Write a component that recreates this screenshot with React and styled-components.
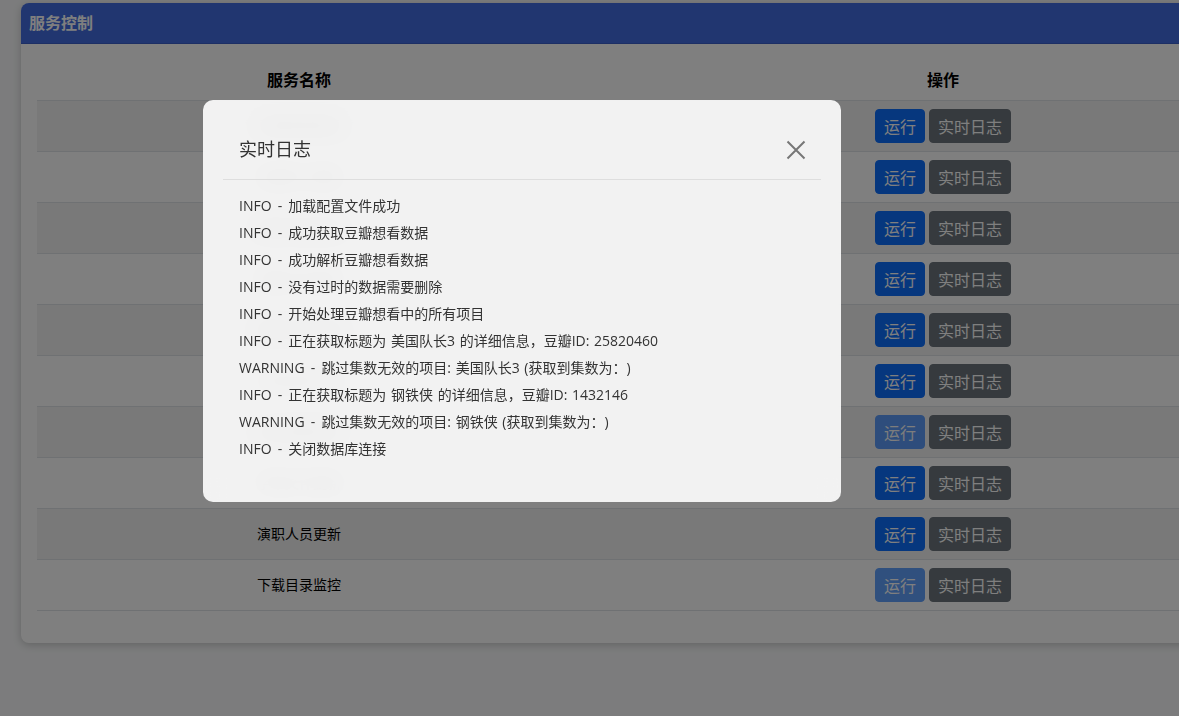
import React from "react";
import styled, { createGlobalStyle } from "styled-components";

const services = [
  { name: "豆瓣想看更新" },
  { name: "豆瓣热门更新" },
  { name: "电影信息更新" },
  { name: "剧集信息更新" },
  { name: "媒体文件扫描" },
  { name: "订阅内容下载" },
  { name: "站点数据同步", running: true },
  { name: "字幕文件更新" },
  { name: "演职人员更新" },
  { name: "下载目录监控", running: true },
];

const logs = [
  { level: "INFO", text: "加载配置文件成功" },
  { level: "INFO", text: "成功获取豆瓣想看数据" },
  { level: "INFO", text: "成功解析豆瓣想看数据" },
  { level: "INFO", text: "没有过时的数据需要删除" },
  { level: "INFO", text: "开始处理豆瓣想看中的所有项目" },
  { level: "INFO", text: "正在获取标题为 美国队长3 的详细信息，豆瓣ID: 25820460" },
  { level: "WARNING", text: "跳过集数无效的项目: 美国队长3 (获取到集数为：)" },
  { level: "INFO", text: "正在获取标题为 钢铁侠 的详细信息，豆瓣ID: 1432146" },
  { level: "WARNING", text: "跳过集数无效的项目: 钢铁侠 (获取到集数为：)" },
  { level: "INFO", text: "关闭数据库连接" },
];

const App = () => (
  <>
    <GlobalStyle />
    <Page>
      <Card>
        <CardHeader>服务控制</CardHeader>
        <CardBody>
          <Table>
            <colgroup>
              <col width="524" />
              <col />
            </colgroup>
            <thead>
              <tr>
                <HeadCell>服务名称</HeadCell>
                <HeadCell>操作</HeadCell>
              </tr>
            </thead>
            <tbody>
              {services.map((service) => (
                <Row key={service.name}>
                  <NameCell>{service.name}</NameCell>
                  <ActionCell>
                    <Button disabled={service.running}>运行</Button>
                    <Button $secondary>实时日志</Button>
                  </ActionCell>
                </Row>
              ))}
            </tbody>
          </Table>
        </CardBody>
      </Card>
    </Page>
    <Overlay>
      <Modal>
        <ModalHeader>
          <ModalTitle>实时日志</ModalTitle>
          <CloseButton aria-label="关闭">
            <svg width="20" height="20" viewBox="0 0 20 20" fill="none">
              <path d="M1.5 1.5L18.5 18.5M18.5 1.5L1.5 18.5" stroke="currentColor" strokeWidth="2" />
            </svg>
          </CloseButton>
        </ModalHeader>
        <ModalBody>
          {logs.map((line) => (
            <LogLine key={line.text}>
              <LogLevel>{line.level} - </LogLevel>
              {line.text}
            </LogLine>
          ))}
        </ModalBody>
      </Modal>
    </Overlay>
  </>
);

export default App;

const GlobalStyle = createGlobalStyle`
  html, body {
    margin: 0;
    height: 100%;
    overflow: hidden;
    background: #f8f9fa;
    font-family: "Open Sans", "Noto Sans CJK SC", sans-serif;
  }
`;

const Page = styled.div`
  padding: 3px 0 0 21px;
  width: 1320px;
`;

const Card = styled.div`
  width: 1320px;
  height: 640px;
  background: #fff;
  border-radius: 8px;
  box-shadow: 0 2px 8px rgba(0, 0, 0, 0.2);
  overflow: hidden;
`;

const CardHeader = styled.div`
  height: 41px;
  padding: 0 8px 2px;
  display: flex;
  align-items: center;
  background: #426ce0;
  border-bottom: 1px solid #3a5fc8;
  box-sizing: border-box;
  color: #fff;
  font-size: 16px;
  font-weight: 700;
`;

const CardBody = styled.div`
  padding: 16px;
`;

const Table = styled.table`
  width: 1288px;
  table-layout: fixed;
  border-collapse: collapse;
  color: #000;
`;

const HeadCell = styled.th`
  height: 40px;
  padding: 0 0 2px;
  font-size: 16px;
  font-weight: 700;
  text-align: center;
  border-bottom: 1px solid #dee2e6;
  box-sizing: border-box;
`;

const Row = styled.tr`
  height: 51px;
  border-bottom: 1px solid #dee2e6;

  &:nth-child(odd) {
    background: #f2f2f2;
  }
`;

const NameCell = styled.td`
  padding: 0 0 2px;
  font-size: 14px;
  text-align: center;
`;

const ActionCell = styled.td`
  padding: 0;
  text-align: center;
  font-size: 0;
`;

const Button = styled.button`
  height: 34px;
  padding: 2px 8px 0;
  margin: 0 2px;
  border: 1px solid ${(p) => (p.$secondary ? "#6c757d" : "#0d6efd")};
  border-radius: 4px;
  background: ${(p) => (p.$secondary ? "#6c757d" : "#0d6efd")};
  color: #fff;
  font-family: inherit;
  font-size: 16px;
  line-height: 1;
  vertical-align: middle;

  &:disabled {
    opacity: 0.65;
  }
`;

const Overlay = styled.div`
  position: fixed;
  inset: 0;
  background: rgba(0, 0, 0, 0.5);
`;

const Modal = styled.div`
  position: absolute;
  top: 100px;
  left: 203px;
  width: 638px;
  height: 402px;
  padding: 0 20px;
  box-sizing: border-box;
  background: rgba(255, 255, 255, 0.9);
  backdrop-filter: blur(10px);
  border-radius: 10px;
  color: #333;
`;

const ModalHeader = styled.div`
  height: 80px;
  padding: 17px 16px 0;
  box-sizing: border-box;
  display: flex;
  align-items: center;
  justify-content: space-between;
  border-bottom: 1px solid #dedede;
`;

const ModalTitle = styled.div`
  font-size: 18px;
`;

const CloseButton = styled.button`
  width: 20px;
  height: 20px;
  padding: 0;
  margin: 4px -1px 0 0;
  display: flex;
  border: none;
  background: none;
  color: #777;
`;

const ModalBody = styled.div`
  padding: 12px 16px 0;
`;

const LogLine = styled.div`
  height: 27px;
  font-size: 14px;
  line-height: 27px;
  white-space: nowrap;
  word-spacing: 1px;
  text-spacing-trim: space-all;
`;

const LogLevel = styled.span`
  word-spacing: 2.5px;
`;
